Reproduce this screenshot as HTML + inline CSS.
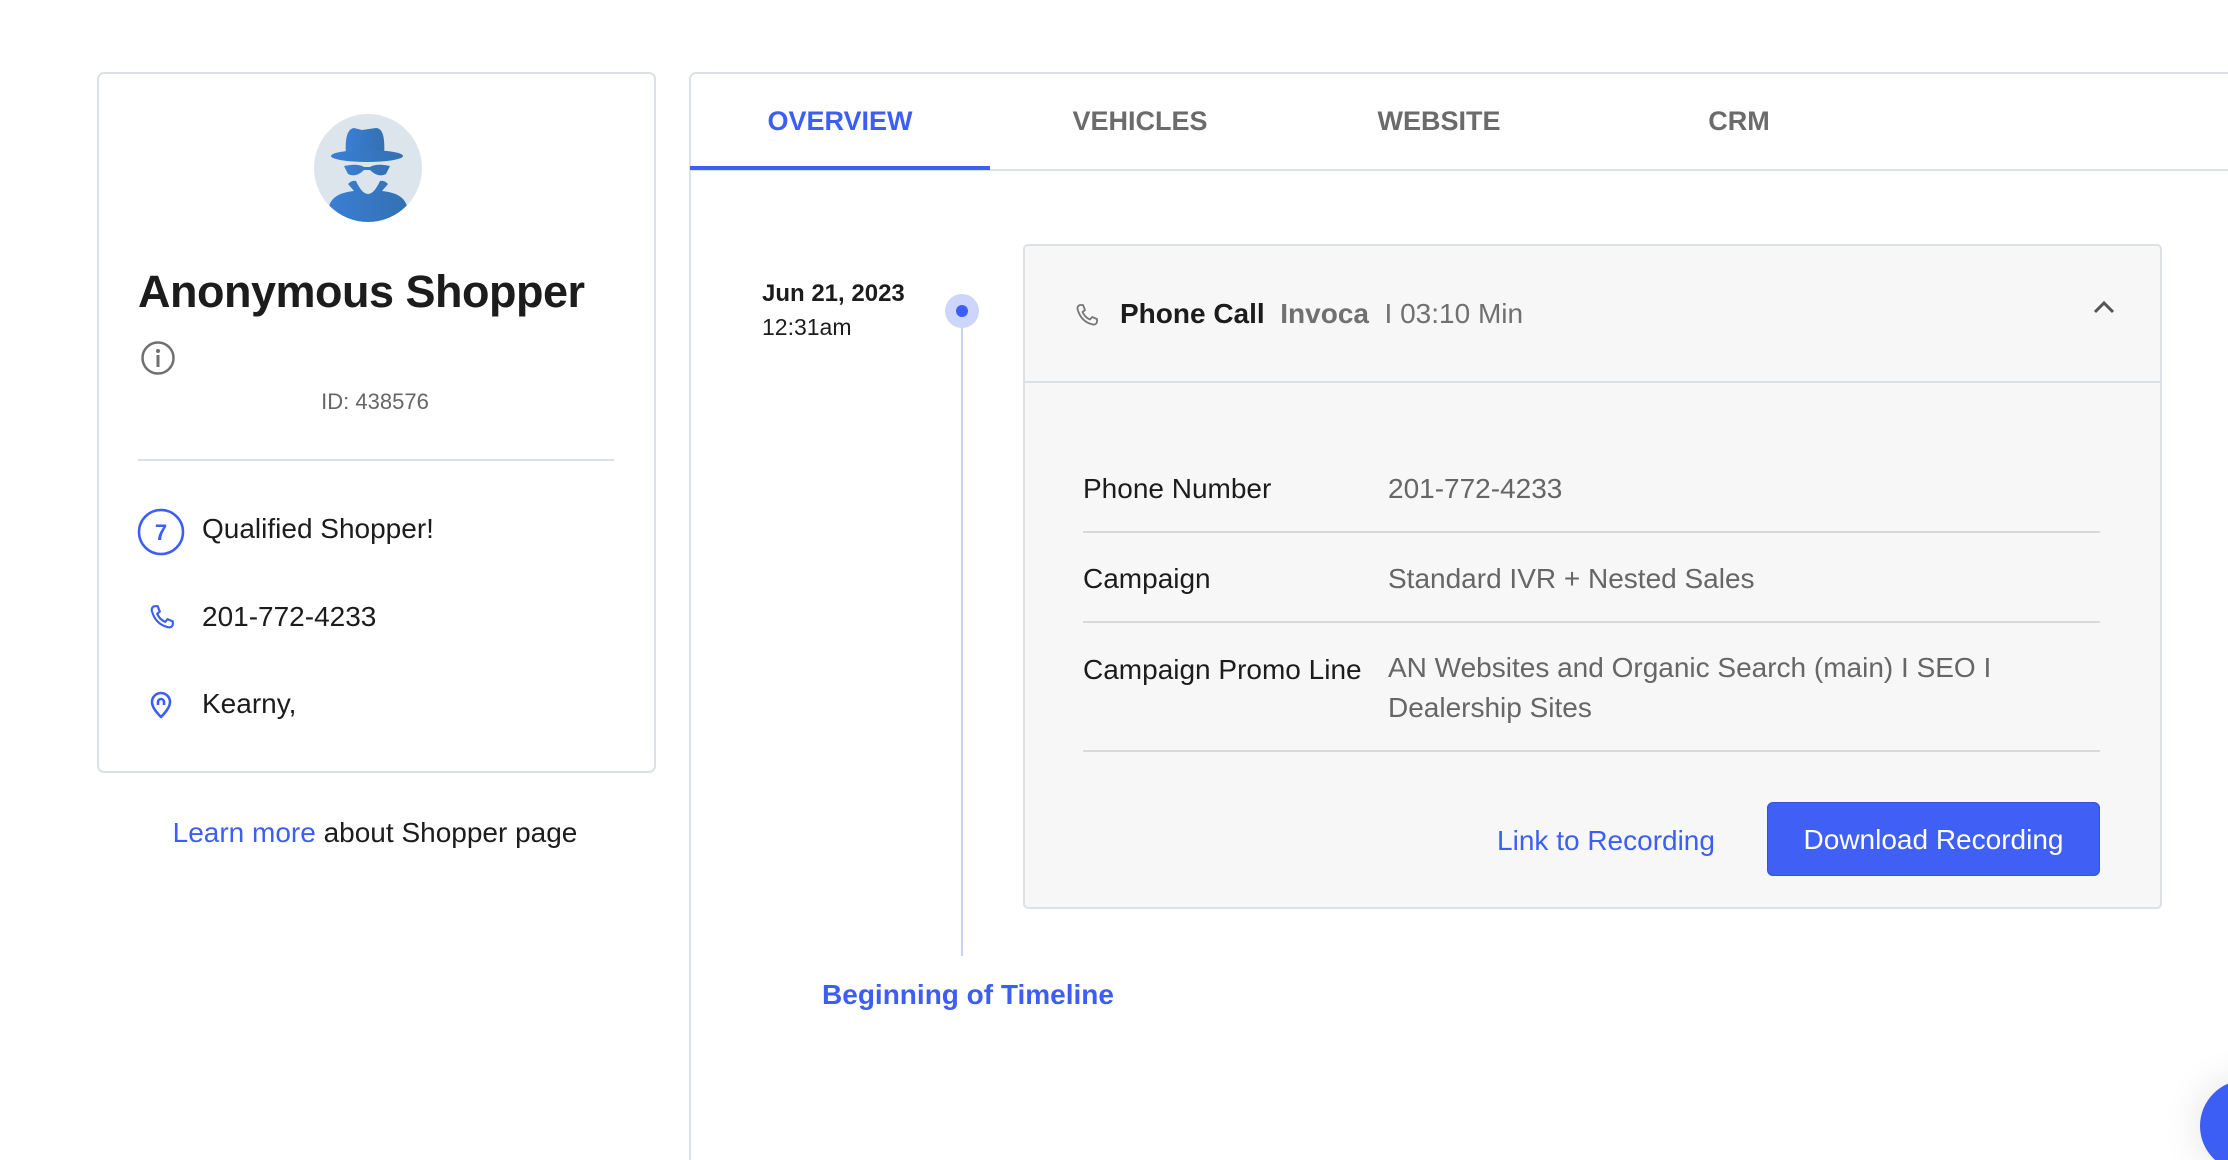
<!DOCTYPE html>
<html style="overflow:hidden;height:1160px"><head><meta charset="utf-8"><style>
*{box-sizing:border-box;margin:0;padding:0}
body{width:2228px;height:1160px;background:#fff;position:relative;overflow:hidden;font-family:"Liberation Sans",sans-serif;color:#1c1c1c}
.a{position:absolute;white-space:nowrap}
.card{left:97px;top:72px;width:559px;height:701px;border:2px solid #dde1e6;border-radius:7px}
.panel{left:689px;top:72px;width:1539px;height:1088px;border-left:2px solid #dde1e6;border-top:2px solid #dde1e6;border-top-left-radius:7px}
.tab{top:106px;font-size:27px;font-weight:bold;color:#6b6b6b;transform:translateX(-50%)}
.lbl{left:1083px;font-size:28px;color:#1c1c1c}
.val{left:1388px;font-size:28px;color:#666}
.hr{left:1083px;width:1017px;height:2px;background:#d9d9d9}
</style></head><body>
<div class="a card"></div>
<svg class="a" style="left:314px;top:114px" width="108" height="108" viewBox="0 0 108 108">
<defs><linearGradient id="g" x1="0" x2="1"><stop offset="0" stop-color="#3a7fd5"/><stop offset="1" stop-color="#3470b2"/></linearGradient><clipPath id="c"><circle cx="54" cy="54" r="54"/></clipPath></defs>
<circle cx="54" cy="54" r="54" fill="#dde5ec"/>
<g clip-path="url(#c)" fill="url(#g)">
<path d="M32 42 Q30 15 40 14 L48 16 L62 14 Q72 14 70 42Z"/>
<ellipse cx="53" cy="42" rx="36" ry="6"/>
<path d="M30 52 Q44 49 50 53 L56 53 Q62 49 76 52 L72 60 Q64 64 56 56 L50 56 Q42 64 34 60Z"/>
<path d="M16 108 Q8 80 40 77 L34 70 Q38 66 42 67 Q48 80 54 80 Q60 80 66 67 Q70 66 74 70 L68 77 Q100 80 92 108Z"/>
</g></svg>
<div class="a" style="left:138px;top:266px;font-size:45px;font-weight:bold;letter-spacing:-0.5px">Anonymous Shopper</div>
<svg class="a" style="left:140px;top:340px" width="36" height="36" viewBox="0 0 36 36"><circle cx="18" cy="18" r="15.5" fill="none" stroke="#707070" stroke-width="2.5"/><circle cx="18" cy="11" r="2" fill="#707070"/><rect x="16.5" y="15" width="3" height="12" fill="#707070"/></svg>
<div class="a" style="left:375px;top:389px;font-size:22px;color:#666;transform:translateX(-50%)">ID: 438576</div>
<div class="a" style="left:138px;top:459px;width:476px;height:2px;background:#dde1e6"></div>
<svg class="a" style="left:137px;top:508px" width="48" height="48"><circle cx="24" cy="24" r="22" fill="none" stroke="#3d5ef5" stroke-width="2.5"/><text x="24" y="32" font-size="22" font-weight="bold" fill="#3d5ef5" text-anchor="middle" font-family="Liberation Sans">7</text></svg>
<div class="a" style="left:202px;top:513px;font-size:28px">Qualified Shopper!</div>
<svg class="a" style="left:149px;top:604px" width="26" height="26" viewBox="0 0 24 24"><path d="M5 2 L8 2 L10 7 L7.5 9 Q10 14.5 15 16.5 L17 14 L22 16 L22 19 Q21 22 18 21.5 Q6 19 2.5 6 Q2.2 3 5 2Z" fill="none" stroke="#3d5ef5" stroke-width="2" stroke-linejoin="round"/></svg>
<div class="a" style="left:202px;top:601px;font-size:28px">201-772-4233</div>
<svg class="a" style="left:149px;top:691px" width="24" height="28" viewBox="0 0 24 28"><path d="M12 26 Q3 17 3 11 A9 9 0 0 1 21 11 Q21 17 12 26Z" fill="none" stroke="#3d5ef5" stroke-width="2.6" stroke-linejoin="round"/><path d="M9 14 L9 11 A3 3 0 0 1 15 11 L15 14" fill="none" stroke="#3d5ef5" stroke-width="2.6"/></svg>
<div class="a" style="left:202px;top:688px;font-size:28px">Kearny,</div>
<div class="a" style="left:375px;top:817px;font-size:28px;transform:translateX(-50%)"><span style="color:#3d5ef5">Learn more</span> about Shopper page</div>

<div class="a panel"></div>
<div class="a" style="left:690px;top:169px;width:1540px;height:2px;background:#dde1e6"></div>
<div class="a" style="left:690px;top:166px;width:300px;height:4px;background:#3d5ef5"></div>
<div class="a tab" style="left:840px;color:#3d5ef5">OVERVIEW</div>
<div class="a tab" style="left:1140px">VEHICLES</div>
<div class="a tab" style="left:1439px">WEBSITE</div>
<div class="a tab" style="left:1739px">CRM</div>

<div class="a" style="left:762px;top:280px;font-size:24px;font-weight:bold">Jun 21, 2023</div>
<div class="a" style="left:762px;top:314px;font-size:23px">12:31am</div>
<div class="a" style="left:961px;top:328px;width:2px;height:628px;background:#c9d2f5"></div>
<div class="a" style="left:945px;top:294px;width:34px;height:34px;border-radius:50%;background:#ccd6fb"></div>
<div class="a" style="left:956px;top:305px;width:12px;height:12px;border-radius:50%;background:#3d5ef5"></div>

<div class="a" style="left:1023px;top:244px;width:1139px;height:665px;background:#f7f7f7;border:2px solid #dde1e6;border-radius:5px"></div>
<div class="a" style="left:1024px;top:381px;width:1137px;height:2px;background:#dde1e6"></div>
<svg class="a" style="left:1075px;top:302px" width="24" height="26" viewBox="0 0 24 24"><path d="M5 2 L8 2 L10 7 L7.5 9 Q10 14.5 15 16.5 L17 14 L22 16 L22 19 Q21 22 18 21.5 Q6 19 2.5 6 Q2.2 3 5 2Z" fill="none" stroke="#777" stroke-width="1.8" stroke-linejoin="round"/></svg>
<div class="a" style="left:1120px;top:298px;font-size:28px"><b>Phone Call</b>&nbsp; <b style="color:#707070">Invoca</b>&nbsp; <span style="color:#707070">I 03:10 Min</span></div>
<svg class="a" style="left:2093px;top:300px" width="22" height="14"><path d="M2 12 L11 3 L20 12" fill="none" stroke="#555" stroke-width="3"/></svg>

<div class="a lbl" style="top:473px">Phone Number</div><div class="a val" style="top:473px">201-772-4233</div>
<div class="a hr" style="top:531px"></div>
<div class="a lbl" style="top:563px">Campaign</div><div class="a val" style="top:563px">Standard IVR + Nested Sales</div>
<div class="a hr" style="top:621px"></div>
<div class="a lbl" style="top:654px">Campaign Promo Line</div><div class="a val" style="top:654px;line-height:40px;margin-top:-6px">AN Websites and Organic Search (main) I SEO I<br>Dealership Sites</div>
<div class="a hr" style="top:750px"></div>
<div class="a" style="left:1606px;top:825px;font-size:28px;color:#3d5ef5;transform:translateX(-50%)">Link to Recording</div>
<div class="a" style="left:1767px;top:802px;width:333px;height:74px;background:#3f5ff5;border:1px solid #3552d8;border-radius:6px;color:#fff;font-size:28px;text-align:center;line-height:74px">Download Recording</div>

<div class="a" style="left:968px;top:979px;font-size:28px;font-weight:bold;color:#3d5ef5;transform:translateX(-50%)">Beginning of Timeline</div>
<div class="a" style="left:2200px;top:1080px;width:92px;height:92px;border-radius:50%;background:#3d5ef5;box-shadow:0 0 40px rgba(0,0,0,0.12)"></div>
</body></html>
